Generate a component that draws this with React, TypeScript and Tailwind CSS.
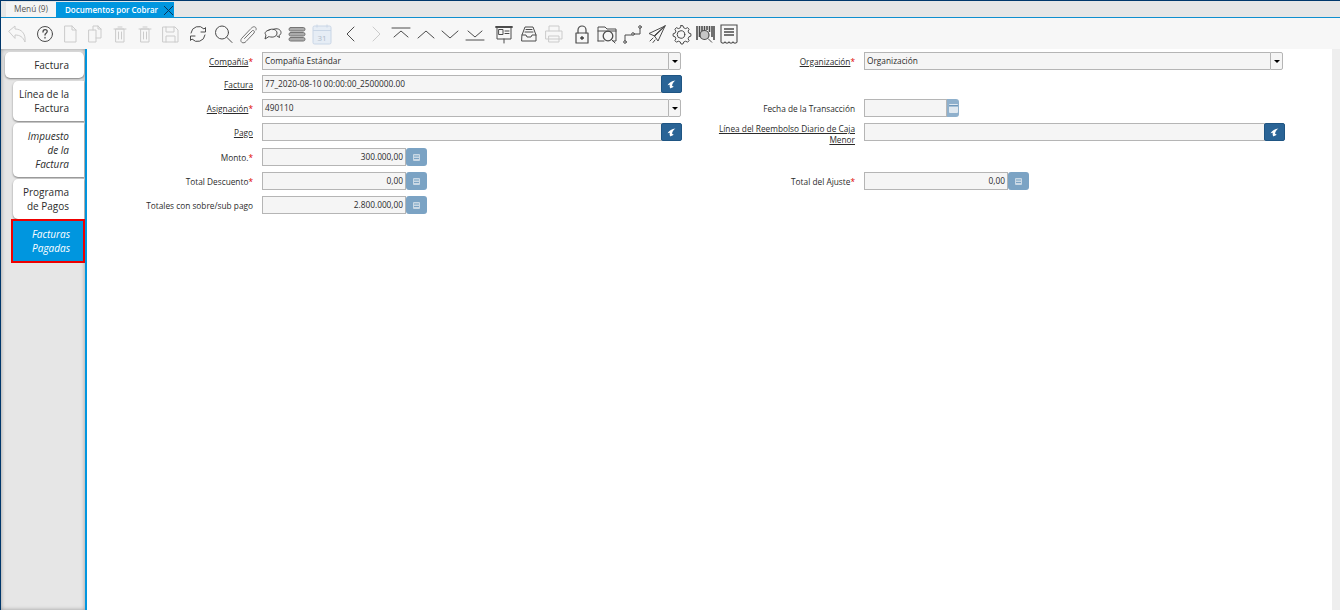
import React from "react";

type IconProps = { disabled?: boolean; children: React.ReactNode; w?: string };
function Tool({ disabled, children, w = "w-[25px]" }: IconProps) {
  return (
    <span className={`${w} h-[24px] flex items-center justify-center shrink-0 ${disabled ? "opacity-20" : "opacity-80"}`}>
      <svg width="24" height="24" viewBox="0 0 24 24" fill="none" stroke="#222" strokeWidth="1" strokeLinecap="round" strokeLinejoin="round">
        {children}
      </svg>
    </span>
  );
}

function Label({ text, req, u, className = "" }: { text: string; req?: boolean; u?: boolean; className?: string }) {
  return (
    <div className={`self-start min-h-[18px] pr-[1px] flex items-center justify-end text-right text-[8.3px] leading-[11px] text-[#2b2b2b] ${className}`}>
      <span>
        <span className={u ? "underline" : ""}>{text}</span>
        {req && <span className="text-[#e00000]">*</span>}
      </span>
    </div>
  );
}

function Box({ value, right, className = "" }: { value?: string; right?: boolean; className?: string }) {
  return (
    <div className={`h-[18px] bg-[#f5f5f5] border border-[#b5b5b5] flex items-center px-[2px] text-[8.3px] text-[#2b2b2b] whitespace-nowrap overflow-hidden ${right ? "justify-end" : ""} ${className}`}>
      {value}
    </div>
  );
}

function Combo({ value, w }: { value: string; w: string }) {
  return (
    <div className={`flex h-[18px] self-start ${w}`}>
      <Box value={value} className="flex-1 border-r-0" />
      <div className="w-[13px] h-[18px] bg-[#f5f5f5] border border-[#b5b5b5] rounded-r-[2px] flex items-center justify-center">
        <span className="w-0 h-0 border-l-[3px] border-r-[3px] border-t-[3px] border-l-transparent border-r-transparent border-t-black" />
      </div>
    </div>
  );
}

function Search({ value, w }: { value?: string; w: string }) {
  return (
    <div className={`flex h-[18px] self-start ${w}`}>
      <Box value={value} className="flex-1" />
      <div className="w-[21px] h-[18px] -ml-[1px] bg-[#2a6496] border border-[#1f5583] rounded-[2px] flex items-center justify-center shrink-0">
        <svg width="9" height="9" viewBox="0 0 8 8"><path d="M7.500 0.500C4.500 0.800 1.800 2.500 0.500 4.700L2.500 4.300C2.200 5.500 2.300 6.700 3 7.500C3.700 7.200 5 6.600 6 6L4.500 5C4.800 3.200 5.800 1.600 7.500 0.500Z" fill="#fff" /></svg>
      </div>
    </div>
  );
}

function Calc({ value, w = "w-[165px]" }: { value: string; w?: string }) {
  return (
    <div className={`flex h-[18px] self-start ${w}`}>
      <Box value={value} right className="flex-1" />
      <div className="w-[21px] h-[18px] bg-[#7ba3c4] rounded-[3px] flex items-center justify-center shrink-0">
        <svg width="7" height="7" viewBox="0 0 7 7"><rect x="0" y="0" width="7" height="7" rx="1" fill="#c9d8e5" /><rect x="1" y="1.500" width="5" height="1" fill="#7ba3c4" /><rect x="1" y="4" width="5" height="1" fill="#7ba3c4" /></svg>
      </div>
    </div>
  );
}

function DateField() {
  return (
    <div className="flex h-[18px] w-[95px] self-start">
      <Box className="flex-1" />
      <div className="w-[12px] h-[18px] bg-[#8fb0cc] rounded-r-[3px] flex items-center justify-center shrink-0">
        <svg width="9" height="9" viewBox="0 0 9 9"><rect width="9" height="9" rx="1" fill="#dfe8f0" /><rect y="1" width="9" height="1.500" fill="#6f98bb" /></svg>
      </div>
    </div>
  );
}

function Tab({ lines, italic, className }: { lines: string[]; italic?: boolean; className: string }) {
  return (
    <div className={`bg-white shadow-[0_1px_2px_rgba(0,0,0,0.45)] flex flex-col justify-center items-end pr-[15px] text-[10px] leading-[14px] text-[#2b2b2b] text-right ${italic ? "italic" : ""} ${className}`}>
      {lines.map((l) => <span key={l}>{l}</span>)}
    </div>
  );
}

export default function App() {
  return (
    <div className="font-['Open_Sans','Noto_Sans',sans-serif] w-[1340px] h-[610px] overflow-hidden bg-white flex flex-col border-t border-l border-[#00376b]">
      {/* tab strip */}
      <div className="h-[17px] bg-[#e6e6e6] flex items-end pl-[5px] border-b border-[#0f8fcf] shrink-0">
        <div className="w-[50px] h-[15px] bg-[#f4f4f4] text-[8.300px] text-[#555] flex items-center justify-center">Menú (9)</div>
        <div className="w-[118px] h-[15px] bg-[#0096df] text-[8px] font-semibold text-white flex items-center pl-[9px] relative">
          Documentos por Cobrar
          <svg className="absolute right-[0px] top-[3px]" width="11" height="11" viewBox="0 0 11 11"><path d="M1 1L10 10M10 1L1 10" stroke="#0d3558" strokeWidth="1" /></svg>
        </div>
      </div>
      {/* toolbar */}
      <div className="h-[31px] bg-[#f7f7f7] flex items-center pl-[4px] shrink-0">
        <Tool disabled w="w-[24px]"><path d="M4 9l6-5v3c6 0 11 4 10 13-2-5-5-7-10-7v3z" /></Tool>
        <span className="w-[4px]" />
        <Tool w="w-[24px]"><circle cx="12" cy="12" r="7.500" /><path d="M10 10c0-3 4.200-3 4.200-.5 0 1.700-2.200 1.700-2.200 3.500M12 15.500v.5" strokeWidth="1.300" /></Tool>
        <Tool disabled><path d="M7 4h7l4 4v12H7zM14 4v4h4" /></Tool>
        <Tool disabled><path d="M6 8h7v12H6zM10 8V4h5l3 3v9h-5M15 4v3h3" /></Tool>
        <Tool disabled><path d="M8 7h8v13H8zM6 7h12M10 5h4M10.500 10v7M13.500 10v7" /></Tool>
        <Tool disabled><path d="M8 7h8v13H8zM6 7h12M10 5h4M10.500 10v7M13.500 10v7" /></Tool>
        <Tool disabled><path d="M5 5h12l3 3v12H5zM8 5v5h8V5M8 20v-6h9v6" /></Tool>
        <span className="w-[3px]" />
        <Tool><path d="M5 11a7.500 7.500 0 0 1 13-4l1.500-1.500v4.500H15M19 13a7.500 7.500 0 0 1-13 4l-1.500 1.500V14H9" /></Tool>
        <Tool><circle cx="11" cy="10.500" r="6.500" /><path d="M16 15.500l5 5" /></Tool>
        <Tool><path d="M20 8c1-2-1-4-3-3-1 .3-2 1.500-3 2.500L6 16c-2 2-1 4 0 4.500s3 .5 4-1l8-8.500c1-1.500 0-3-1.500-2.500L8.500 16.500" stroke="#555" /></Tool>
        <Tool w="w-[24px]"><path d="M9 8c3-2 8-.5 8 3 0 3-3 4.500-6 4-1 0-2-.5-2-.5L5 17l1-4c-2-2-.5-4 3-5zM13 7.500c4-2 8 0 8 3 0 1.500-1 2.500-2 3l.5 2-2.500-1.500" /></Tool>
        <Tool><rect x="4" y="5.500" width="16" height="3.500" rx="1.700" fill="#999" stroke="#555" /><rect x="4" y="10.500" width="16" height="3.500" rx="1.700" fill="#999" stroke="#555" /><rect x="4" y="15.500" width="16" height="3.500" rx="1.700" fill="#999" stroke="#555" /></Tool>
        <span className="w-[25px] h-[24px] flex items-center justify-center shrink-0">
          <svg width="24" height="24" viewBox="0 0 24 24" fill="none" stroke="#c9d6e6" strokeWidth="1">
            <rect x="3" y="4" width="18" height="18" rx="1.500" fill="#e6edf5" />
            <path d="M3 8.500h18M7 2.500v3M17 2.500v3" />
            <text x="12" y="19" textAnchor="middle" fontSize="8" fill="#b0bcca" stroke="none">31</text>
          </svg>
        </span>
        <span className="w-[4px]" />
        <Tool><path d="M15 5l-7 7 7 7" /></Tool>
        <Tool disabled><path d="M9 5l7 7-7 7" /></Tool>
        <Tool><path d="M3 6h18M5 15l7-6 7 6" /></Tool>
        <Tool><path d="M4 16l8-7 8 7" /></Tool>
        <Tool w="w-[24px]"><path d="M4 9l8 7 8-7" /></Tool>
        <Tool><path d="M5 9l7 6 7-6M3 18h18" /></Tool>
        <span className="w-[4px]" />
        <Tool><path d="M4 5h16" strokeWidth="1.800" /><path d="M5 5v12h14V5M12 17v4M7 7.500h4v5H7zM13 9h4M13 11.500h4" /></Tool>
        <Tool><path d="M5 13l3-8h8l3 8v6H5zM5 13h4l1 2h4l1-2h4M8 10h8M9 7.500h6" /></Tool>
        <Tool disabled><path d="M7 9V4h10v5M4 9h16v8H4zM7 14h10v6H7z" /></Tool>
        <span className="w-[4px]" />
        <Tool w="w-[24px]"><path d="M8 11V8a4 4 0 0 1 8 0v3" strokeWidth="1.200" /><path d="M6 11h12v10H6z" strokeWidth="1.200" /><circle cx="12" cy="16" r="1.300" fill="#222" /></Tool>
        <Tool><path d="M3 19V5h7l2 2h9v12h-3M3 19h6M3 9h18" /><circle cx="13" cy="14" r="4.800" strokeWidth="1.300" /><path d="M16.500 17.500l3.500 3.500" /></Tool>
        <Tool><circle cx="5" cy="20" r="1.300" /><circle cx="13" cy="12" r="1.300" /><circle cx="20" cy="5" r="1.300" /><path d="M5 18.500V13h6.500M14.500 12H20V6.500" /></Tool>
        <Tool><path d="M20 4L4 11.500l5.500 2.500zM20 4L13 19l-3.500-5zM20 4L9.500 14M8 16l-3 3M10 18l-2 2.500" /></Tool>
        <Tool w="w-[24px]"><path d="M12 3.500l2 .3.700 2 2 .8 1.900-1 1.500 1.700-1 1.800.8 2 2 .7v2.300l-2 .7-.8 2 1 1.800-1.500 1.600-1.900-1-2 .8-.7 2h-2l-.7-2-2-.8-1.900 1-1.500-1.600 1-1.800-.8-2-2-.7v-2.300l2-.7.800-2-1-1.800 1.500-1.700 1.900 1 2-.8.700-2z" /><circle cx="12" cy="12.500" r="3.800" /></Tool>
        <span className="w-[24px] h-[24px] flex items-center justify-center shrink-0 opacity-80">
          <svg width="24" height="24" viewBox="0 0 24 24" fill="none" stroke="#222" strokeWidth="1.600">
            <path d="M4 4v14M6.500 4v11M9 4v5M11.500 4v4M14 4v4M16.500 4v6M19 4v11M21 4v14" />
            <circle cx="11.500" cy="13" r="4.500" strokeWidth="1.200" fill="#bbb" />
            <path d="M15 16.500l4 4" strokeWidth="1" />
          </svg>
        </span>
        <span className="w-[24px] h-[24px] flex items-center justify-center shrink-0 opacity-80">
          <svg width="24" height="24" viewBox="0 0 24 24" fill="none" stroke="#222" strokeWidth="1.100">
            <path d="M4 3h16v17c-1 1.500-3 1.500-4 0-1 1.500-3 1.500-4 0-1 1.500-3 1.500-4 0-1 1.500-3 1.500-4 0z" />
            <path d="M7 7h10M7 10h10M7 13h10" strokeWidth="1.800" stroke="#555" />
          </svg>
        </span>
      </div>
      {/* body */}
      <div className="flex-1 flex min-h-0">
        <div className="w-[86px] shrink-0 bg-[#e6e6e6] border-r-2 border-[#0096df] pt-[3px] shadow-[inset_0_0_4px_rgba(0,0,0,0.35)]">
          <Tab lines={["Factura"]} className="ml-[4px] w-[79px] h-[26px] rounded-[5px] mb-[3px]" />
          <Tab lines={["Línea de la", "Factura"]} className="ml-[12px] w-[71px] h-[40px] rounded-l-[5px] mb-[2px]" />
          <Tab italic lines={["Impuesto", "de la", "Factura"]} className="ml-[12px] w-[71px] h-[54px] rounded-l-[5px] mb-[2px]" />
          <Tab lines={["Programa", "de Pagos"]} className="ml-[12px] w-[71px] h-[40px] rounded-l-[5px]" />
          <div className="ml-[10px] w-[74px] h-[44px] bg-[#0096df] border-2 border-[#ee0000] flex flex-col justify-center items-end pr-[13px] italic text-white text-[10px] leading-[14px] text-right">
            <span>Facturas</span><span>Pagadas</span>
          </div>
        </div>
        {/* form */}
        <div className="flex-1 grid grid-cols-[167px_420px_166px_1fr] grid-rows-[23px_24px_24px_25px_24px_24px_24px] gap-x-[8px] pt-[3px] content-start">
          <Label u req text="Compañía" />
          <Combo value="Compañía Estándar" w="w-[419px]" />
          <Label u req text="Organización" />
          <Combo value="Organización" w="w-[419px]" />

          <Label u text="Factura" />
          <Search value="77_2020-08-10 00:00:00_2500000.00" w="w-[420px]" />
          <span /><span />

          <Label u req text="Asignación" />
          <Combo value="490110" w="w-[419px]" />
          <Label text="Fecha de la Transacción" />
          <DateField />

          <Label u text="Pago" />
          <Search w="w-[420px]" />
          <Label u text="Línea del Reembolso Diario de Caja Menor" className="ml-[28px]" />
          <Search w="w-[421px]" />

          <Label req text="Monto." />
          <Calc value="300.000,00" />
          <span /><span />

          <Label req text="Total Descuento" />
          <Calc value="0,00" />
          <Label req text="Total del Ajuste" />
          <Calc value="0,00" />

          <Label text="Totales con sobre/sub pago" />
          <Calc value="2.800.000,00" />
        </div>
        <div className="w-[8px] shrink-0 bg-[#eeeeee]" />
      </div>
    </div>
  );
}
